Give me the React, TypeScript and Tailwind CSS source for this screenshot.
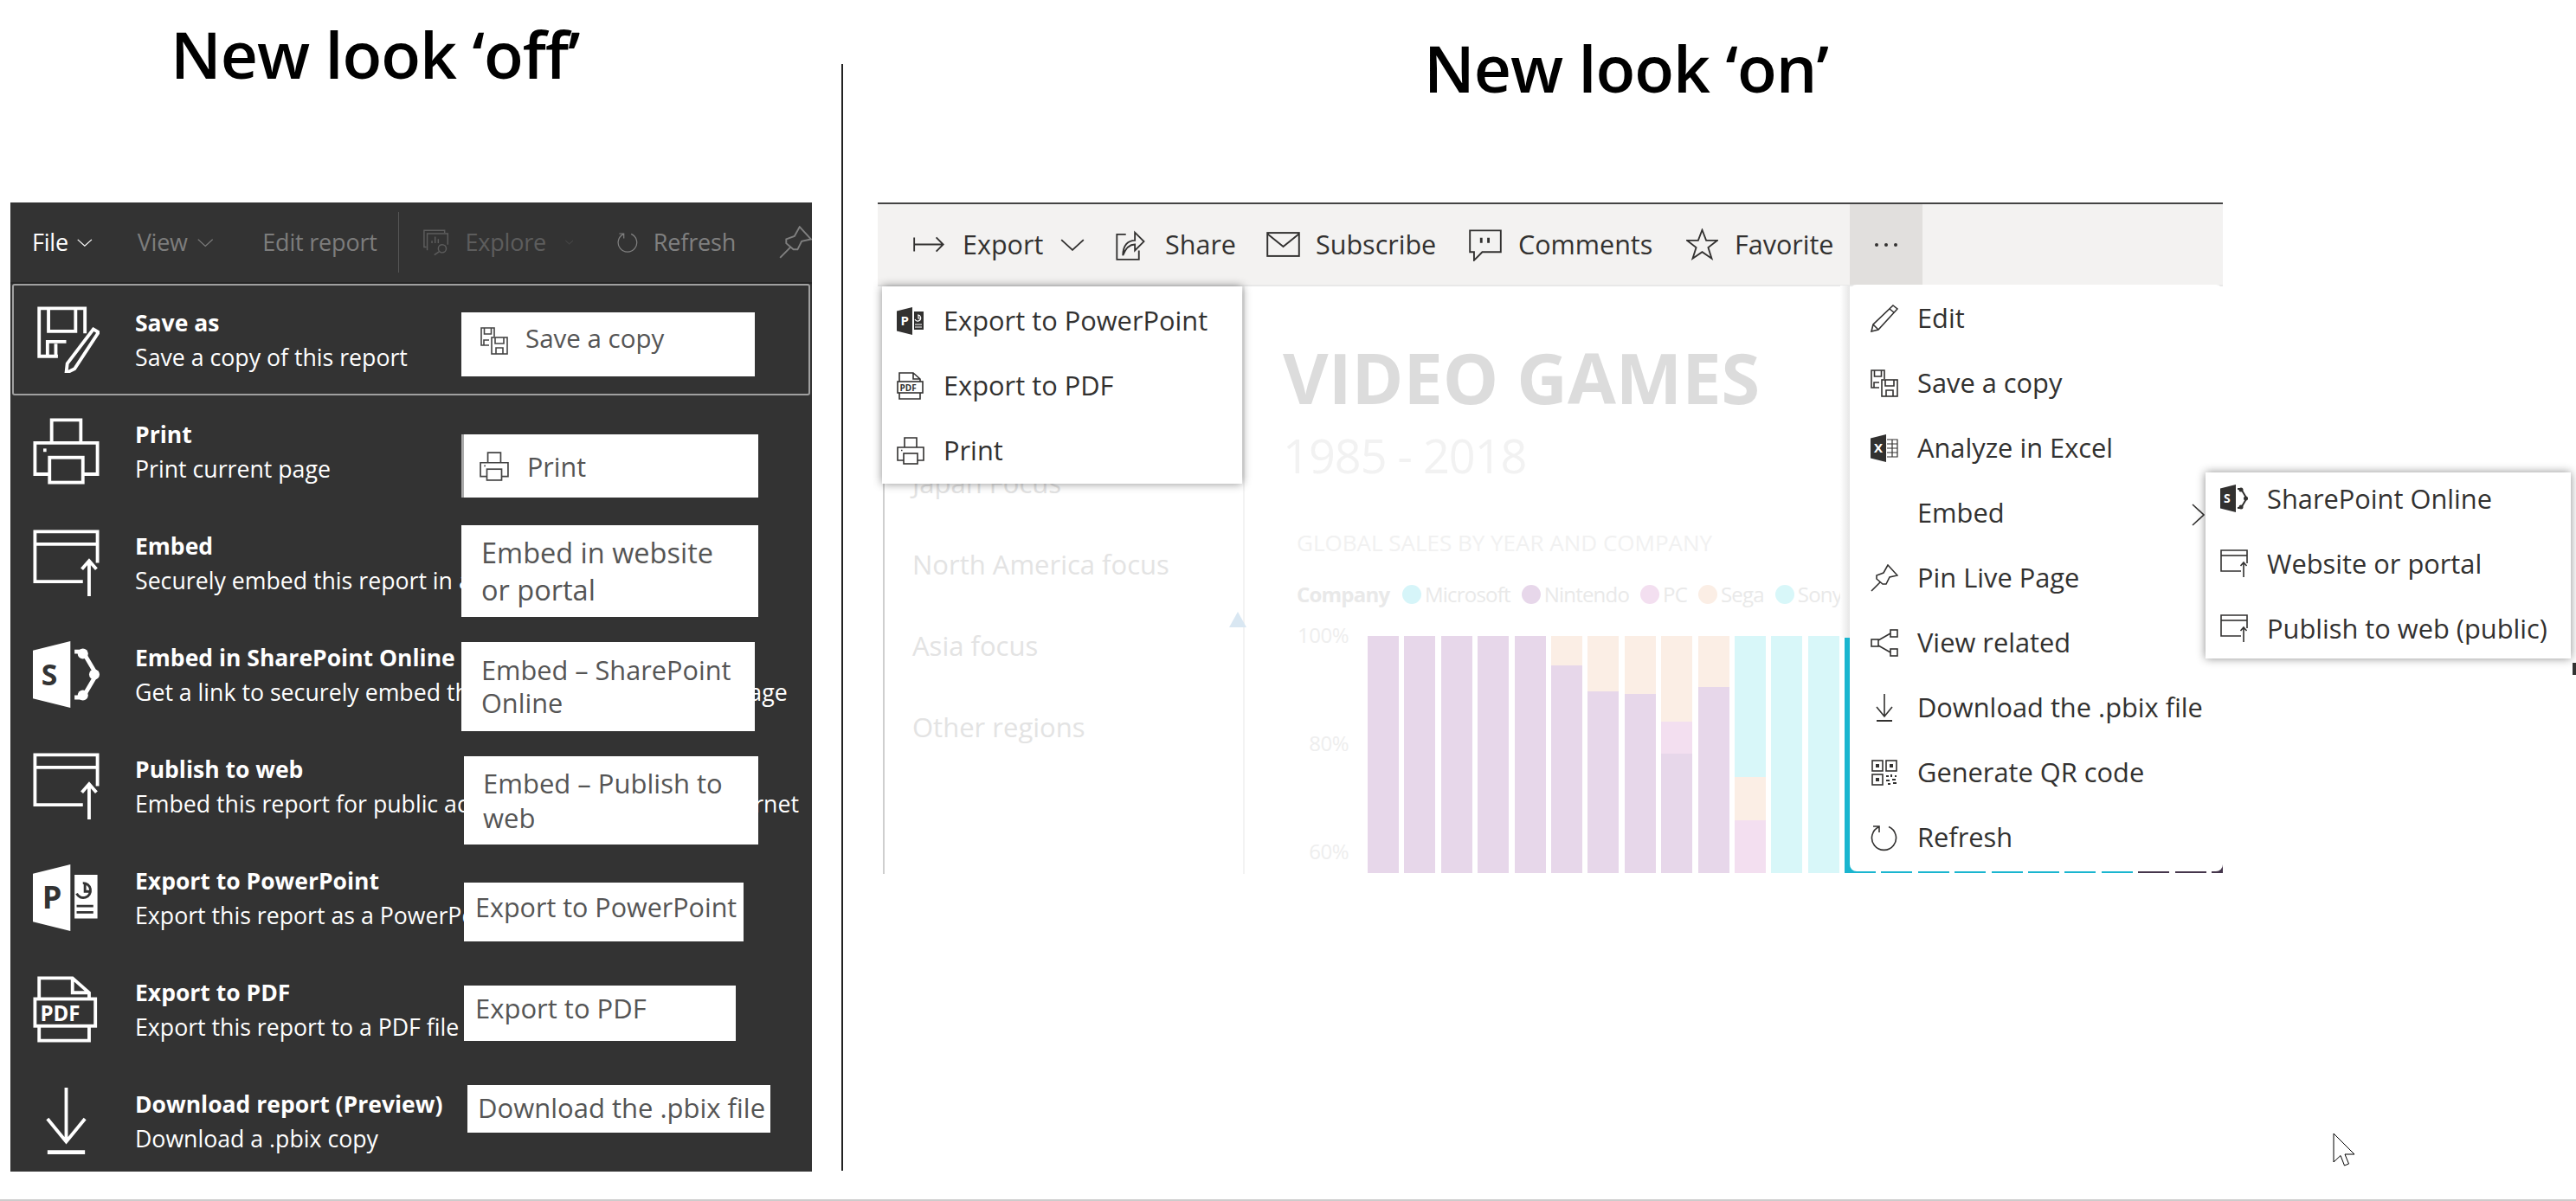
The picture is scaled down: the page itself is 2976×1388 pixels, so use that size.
import type { ReactNode } from "react";

type IconProps = { className?: string; ink?: string };

function Svg({ className, children }: { className?: string; children: ReactNode }) {
  return (
    <svg viewBox="0 0 32 32" fill="none" stroke="currentColor" strokeWidth="1.6" className={className}>
      {children}
    </svg>
  );
}

function SaveCopyIcon({ className }: IconProps) {
  return (
    <Svg className={className}>
      <path d="M10 21H1V1h15v10" />
      <path d="M4.500 1v7h8V1" />
      <path d="M4 21v-6h6" />
      <rect x="13" y="12" width="18" height="19" />
      <path d="M17 12v7h10v-7M18 31v-7h8v7" />
    </Svg>
  );
}

function SaveAsIcon({ className }: IconProps) {
  return (
    <Svg className={className}>
      <path d="M12 24H3V1h22v12" />
      <path d="M7.500 1v11h13V1" />
      <path d="M7 24v-7h9M11 18v6" />
      <path d="M29 11l2.500 1.500L20 30l-4 2 .5-4.500z" />
    </Svg>
  );
}

function PrintIcon({ className }: IconProps) {
  return (
    <Svg className={className}>
      <path d="M9 12V1h14v11" />
      <path d="M8 27H1V12h30v15h-7" />
      <rect x="8" y="19" width="16" height="12" />
      <path d="M5 15.500h1.500" />
    </Svg>
  );
}

function EmbedIcon({ className }: IconProps) {
  return (
    <Svg className={className}>
      <path d="M24 25H1V1h30v15" />
      <path d="M1 7h30" />
      <path d="M27 32V15M23.500 19l3.500-4 3.500 4" />
    </Svg>
  );
}

function SharePointIcon({ className, ink = "#fff" }: IconProps) {
  return (
    <Svg className={className}>
      <path d="M0 4.500L18 0v32L0 27.500z" fill="currentColor" stroke="none" />
      <text x="4" y="21" fontSize="14" fontWeight="700" fill={ink} stroke="none" fontFamily="Open Sans">S</text>
      <path d="M20 5h4l6.500 11L24 27h-4" strokeWidth="2" />
      <circle cx="24" cy="6" r="2.500" fill="currentColor" stroke="none" />
      <circle cx="24" cy="26" r="2.500" fill="currentColor" stroke="none" />
      <circle cx="29.500" cy="16" r="2.500" fill="currentColor" stroke="none" />
    </Svg>
  );
}

function PowerPointIcon({ className, ink = "#fff" }: IconProps) {
  return (
    <Svg className={className}>
      <path d="M0 4.500L18 0v32L0 27.500z" fill="currentColor" stroke="none" />
      <text x="4.500" y="21" fontSize="15" fontWeight="700" fill={ink} stroke="none" fontFamily="Open Sans">P</text>
      <path d="M20 5h11v21H20z" fill="currentColor" stroke="none" />
      <path d="M24 9a3.500 3.500 0 1 1-3 5M25 9v4h3M21 20h8M21 23h8" stroke={ink} strokeWidth="1.200" />
    </Svg>
  );
}

function ExcelIcon({ className, ink = "#fff" }: IconProps) {
  return (
    <Svg className={className}>
      <path d="M0 4.500L18 0v32L0 27.500z" fill="currentColor" stroke="none" />
      <text x="4" y="21" fontSize="15" fontWeight="700" fill={ink} stroke="none" fontFamily="Open Sans">X</text>
      <path d="M19 6h12v20H19M19 11h12M19 16h12M19 21h12M25 6v20" strokeWidth="1.200" />
    </Svg>
  );
}

function PdfIcon({ className }: IconProps) {
  return (
    <Svg className={className}>
      <path d="M3 11V1h16l8 7v3M3 24v7h24v-7M19 1v7h8" />
      <rect x="1" y="11" width="29" height="13" />
      <text x="3.500" y="21.500" fontSize="10" fontWeight="700" fill="currentColor" stroke="none" fontFamily="Open Sans">PDF</text>
    </Svg>
  );
}

function DownloadIcon({ className }: IconProps) {
  return (
    <Svg className={className}>
      <path d="M16 0v26M7 15l9 11 9-11" />
      <path d="M7 31h18" strokeWidth="2" />
    </Svg>
  );
}

function PencilIcon({ className }: IconProps) {
  return (
    <Svg className={className}>
      <path d="M26 1l5 4-22 24-8 2 2-8zM3 23l6 6M22 5l5 4" />
    </Svg>
  );
}

function PinIcon({ className }: IconProps) {
  return (
    <Svg className={className}>
      <path d="M20 1l11 12-9 2-4 8-4 0L7 17v-4l8-3zM11 21L1 31" />
    </Svg>
  );
}

function RelatedIcon({ className }: IconProps) {
  return (
    <Svg className={className}>
      <rect x="1" y="12" width="8" height="8" />
      <rect x="23" y="1" width="8" height="8" />
      <rect x="23" y="23" width="8" height="8" />
      <path d="M9 13l14-8M9 19l14 8" />
    </Svg>
  );
}

function QrIcon({ className }: IconProps) {
  return (
    <Svg className={className}>
      <rect x="2" y="2" width="12" height="12" />
      <rect x="18" y="2" width="12" height="12" />
      <rect x="2" y="18" width="12" height="12" />
      <path d="M6 6h4v4H6zM22 6h4v4h-4zM6 22h4v4H6z" fill="currentColor" stroke="none" />
      <path d="M18 20h3M24 18v3M28 20h2M18 25h4M25 24h4M20 29h3M26 28h4" strokeWidth="2" />
    </Svg>
  );
}

function RefreshIcon({ className }: IconProps) {
  return (
    <Svg className={className}>
      <path d="M21 3.500a14 14 0 1 1-11 0M10 10V3H3" />
    </Svg>
  );
}

function ArrowOutIcon({ className }: IconProps) {
  return (
    <Svg className={className}>
      <path d="M1 9v14M1 16h29M23 9l7 7-7 7" />
    </Svg>
  );
}

function ShareIcon({ className }: IconProps) {
  return (
    <Svg className={className}>
      <path d="M11 6H2v25h22v-9" />
      <path d="M8 27c0-10 5-15 12-15V4l9 9-9 9v-6c-5 0-9 3-12 11z" />
    </Svg>
  );
}

function MailIcon({ className }: IconProps) {
  return (
    <Svg className={className}>
      <rect x="1" y="5" width="30" height="22" />
      <path d="M1 6l15 12L31 6" />
    </Svg>
  );
}

function CommentIcon({ className }: IconProps) {
  return (
    <Svg className={className}>
      <path d="M1 2h30v21H13l-8 8v-8H1z" />
      <path d="M12 9v5M19 9v5" strokeWidth="2.400" />
    </Svg>
  );
}

function StarIcon({ className }: IconProps) {
  return (
    <Svg className={className}>
      <path d="M16 1.500l4 10.500h11l-9 7 3.500 11L16 23.500 6.500 30 10 19l-9-7h11z" />
    </Svg>
  );
}

function Chevron({ className }: IconProps) {
  return (
    <svg viewBox="0 0 24 12" fill="none" stroke="currentColor" strokeWidth="1.600" className={className}>
      <path d="M1 1l11 10L23 1" />
    </svg>
  );
}

function ExploreIcon({ className }: IconProps) {
  return (
    <Svg className={className}>
      <path d="M4 22H1V1h26v3" />
      <path d="M5 26V5h26v14" />
      <path d="M11 17v-3M15 17V9M19 17v-5" />
      <circle cx="24" cy="24" r="5" />
      <path d="M20 28l-6 4" />
    </Svg>
  );
}

const panelIcon = "w-[77px] h-[77px]";

const panelRows = [
  { title: "Save as", desc: "Save a copy of this report", icon: <SaveAsIcon className={panelIcon} />, active: true },
  { title: "Print", desc: "Print current page", icon: <PrintIcon className={panelIcon} /> },
  { title: "Embed", desc: "Securely embed this report in a website or portal", icon: <EmbedIcon className={panelIcon} /> },
  { title: "Embed in SharePoint Online", desc: "Get a link to securely embed this report in a SharePoint page", icon: <SharePointIcon ink="#333333" className={panelIcon} /> },
  { title: "Publish to web", desc: "Embed this report for public access by anyone on the internet", icon: <EmbedIcon className={panelIcon} /> },
  { title: "Export to PowerPoint", desc: "Export this report as a PowerPoint presentation", icon: <PowerPointIcon ink="#333333" className={panelIcon} /> },
  { title: "Export to PDF", desc: "Export this report to a PDF file", icon: <PdfIcon className={panelIcon} /> },
  { title: "Download report (Preview)", desc: "Download a .pbix copy", icon: <DownloadIcon className={panelIcon} /> },
];

function Callout({ className, children }: { className: string; children: ReactNode }) {
  return <div className={"absolute bg-white text-[#555] " + className}>{children}</div>;
}

function MenuRow({ icon, label, height }: { icon?: ReactNode; label: string; height: string }) {
  return (
    <div className={"flex items-center " + height}>
      <div className="w-[32px] h-[32px] shrink-0 text-[#323130]">{icon}</div>
      <span className="ml-[22px] text-[30.800px] text-[#323130] whitespace-nowrap">{label}</span>
    </div>
  );
}

const NIN = "#e7d7ea";
const SEG = "#fbeee5";
const PCC = "#f3dff0";
const SON = "#d8f7f9";
const TEAL = "#1ab5cf";
const DARK = "#45364c";

const bars: [string, number][][] = [
  [[NIN, 274]],
  [[NIN, 274]],
  [[NIN, 274]],
  [[NIN, 274]],
  [[NIN, 274]],
  [[SEG, 34], [NIN, 240]],
  [[SEG, 64], [NIN, 210]],
  [[SEG, 67], [NIN, 207]],
  [[SEG, 99], [PCC, 37], [NIN, 138]],
  [[SEG, 59], [NIN, 215]],
  [[SON, 163], [SEG, 50], [PCC, 61]],
  [[SON, 274]],
  [[SON, 274]],
  [[TEAL, 274]],
  [[TEAL, 274]],
  [[TEAL, 274]],
  [[TEAL, 274]],
  [[TEAL, 274]],
  [[TEAL, 274]],
  [[TEAL, 274]],
  [[TEAL, 274]],
  [[DARK, 274]],
  [[DARK, 274]],
  [[DARK, 274]],
];

const legend = [
  { name: "Microsoft", color: "#d6f5f9" },
  { name: "Nintendo", color: "#e7d7ea" },
  { name: "PC", color: "#f3dff0" },
  { name: "Sega", color: "#fbeee5" },
  { name: "Sony", color: "#d8f7f9" },
];

export default function App() {
  return (
    <div className="relative w-[2976px] h-[1388px] overflow-hidden bg-white border-b-2 border-[#cccccc] flex font-['Open_Sans',sans-serif]">
      {/* left side */}
      <div className="w-[972px] shrink-0 pl-[12px]">
        <div className="h-[234px] pt-[10px] pl-[185px]">
          <h1 className="text-[75px] leading-[104px] font-semibold text-black tracking-[-1px] whitespace-nowrap">New look ‘off’</h1>
        </div>
        <div className="w-[926px] h-[1120px] bg-[#333333] overflow-hidden">
          <div className="h-[94px] flex items-center text-[27px] tracking-[-0.2px] whitespace-nowrap border-b-2 border-[#262626]">
            <span className="ml-[25px] text-white">File</span>
            <Chevron className="ml-[10px] w-[23px] h-[11px] text-white" />
            <span className="ml-[52px] text-[#7d7d7d]">View</span>
            <Chevron className="ml-[11px] w-[24px] h-[11px] text-[#7d7d7d]" />
            <span className="ml-[57px] text-[#7d7d7d]">Edit report</span>
            <div className="ml-[24px] w-[2px] h-[70px] bg-[#555555]" />
            <ExploreIcon className="ml-[28px] w-[38px] h-[38px] text-[#5d5d5d]" />
            <span className="ml-[19px] text-[#5d5d5d]">Explore</span>
            <Chevron className="ml-[22px] w-[12px] h-[8px] text-[#5d5d5d]" />
            <RefreshIcon className="ml-[51px] w-[32px] h-[32px] text-[#808080]" />
            <span className="ml-[17px] text-[#808080]">Refresh</span>
            <PinIcon className="ml-[50px] w-[38px] h-[38px] text-[#808080] shrink-0" />
          </div>
          {panelRows.map((row) => (
            <div
              key={row.title}
              className={row.active ? "flex items-center h-[129px] mx-[2px] border-2 rounded-[3px] border-[#a0a0a0]" : "flex items-center h-[129px] mx-[2px] border-2 border-transparent"}
            >
              <div className="ml-[22px] w-[77px] h-[77px] shrink-0 text-white">{row.icon}</div>
              <div className="ml-[41px] text-white whitespace-nowrap">
                <div className="text-[26.500px] leading-[39px] font-bold">{row.title}</div>
                <div className="text-[26.700px] leading-[39px]">{row.desc}</div>
              </div>
            </div>
          ))}
        </div>
      </div>

      {/* divider */}
      <div className="w-[2px] h-[1279px] mt-[74px] bg-[#222222] shrink-0" />

      {/* right side */}
      <div className="pl-[40px] flex flex-col">
        <div className="h-[234px] pt-[26px] pl-[631px]">
          <h1 className="text-[75px] leading-[104px] font-semibold text-black tracking-[-1px] whitespace-nowrap">New look ‘on’</h1>
        </div>
        <div className="w-[1554px] h-[776px] overflow-hidden border-t-2 border-[#444444] flex flex-col">
          <div className="h-[95px] shrink-0 bg-[#f3f2f1] border-b-2 border-[#e8e8e8] flex items-center pl-[41px] text-[30.500px] text-[#323130] whitespace-nowrap">
            <div className="w-[233px] flex items-center">
              <ArrowOutIcon className="w-[37px] h-[37px]" />
              <span className="ml-[20px]">Export</span>
              <Chevron className="ml-[20px] w-[28px] h-[14px]" />
            </div>
            <div className="w-[175px] flex items-center">
              <ShareIcon className="w-[37px] h-[37px]" />
              <span className="ml-[21px]">Share</span>
            </div>
            <div className="w-[234px] flex items-center">
              <MailIcon className="w-[39px] h-[39px]" />
              <span className="ml-[18px]">Subscribe</span>
            </div>
            <div className="w-[251px] flex items-center">
              <CommentIcon className="w-[38px] h-[38px]" />
              <span className="ml-[19px]">Comments</span>
            </div>
            <div className="w-[189px] flex items-center">
              <StarIcon className="w-[37px] h-[37px]" />
              <span className="ml-[19px]">Favorite</span>
            </div>
            <div className="w-[84px] h-full bg-[#e1dfdd] flex items-center justify-center gap-[7px]">
              <div className="w-[4px] h-[4px] rounded-full bg-[#323130]" />
              <div className="w-[4px] h-[4px] rounded-full bg-[#323130]" />
              <div className="w-[4px] h-[4px] rounded-full bg-[#323130]" />
            </div>
          </div>

          <div className="flex flex-1 pl-[6px]">
            {/* slicer column */}
            <div className="w-[418px] shrink-0 border-l-2 border-r-2 border-l-[#cfcfcf] border-r-[#f3f3f3] pt-[180px] pl-[32px] text-[31px] text-[#e3e3e3]">
              <div className="h-[94px] flex items-center">Japan Focus</div>
              <div className="h-[94px] flex items-center">North America focus</div>
              <div className="h-[94px] flex items-center">Asia focus</div>
              <div className="h-[94px] flex items-center">Other regions</div>
            </div>

            {/* faded report page */}
            <div className="flex-1 pl-[44px] flex flex-col">
              <div className="mt-[75px] text-[81px] leading-[60px] font-bold text-[#dcdcdc] whitespace-nowrap">VIDEO GAMES</div>
              <div className="mt-[40px] text-[54px] leading-[40px] tracking-[-1px] text-[#f2f2f2]">1985 - 2018</div>
              <div className="mt-[66px] ml-[16px] text-[26px] leading-[30px] text-[#f1f1f1] whitespace-nowrap">GLOBAL SALES BY YEAR AND COMPANY</div>
              <div className="mt-[33px] ml-[16px] h-[24px] flex items-center text-[24px] tracking-[-0.8px] text-[#e9e9e9] whitespace-nowrap">
                <span className="font-bold w-[122px] shrink-0">Company</span>
                {legend.map((item) => (
                  <div key={item.name} className="flex items-center mr-[13px]">
                    <div className="w-[22px] h-[22px] rounded-full" style={{ backgroundColor: item.color }} />
                    <span className="ml-[4px]">{item.name}</span>
                  </div>
                ))}
              </div>
              <div className="mt-[36px] ml-[16px] flex">
                <div className="w-[60px] -mt-[16px] flex flex-col gap-[95px] text-[24px] leading-[30px] tracking-[-0.5px] text-[#eeeeee] text-right">
                  <div>100%</div>
                  <div>80%</div>
                  <div>60%</div>
                </div>
                <div className="ml-[22px] h-[274px] flex gap-[6.4px]">
                  {bars.map((bar, i) => (
                    <div key={i} className="w-[36px] shrink-0 flex flex-col">
                      {bar.map(([color, height], j) => (
                        <div key={j} style={{ backgroundColor: color, height }} />
                      ))}
                    </div>
                  ))}
                </div>
              </div>
            </div>
          </div>
        </div>
      </div>

      {/* callouts over the old file menu */}
      <Callout className="left-[533px] top-[361px] w-[339px] h-[74px] flex items-center pl-[21px] pb-[14px] text-[29.500px] leading-[40px]">
        <SaveCopyIcon className="mt-[6px] w-[34px] h-[32px] text-[#444]" />
        <span className="ml-[19px]">Save a copy</span>
      </Callout>
      <Callout className="left-[533px] top-[502px] w-[343px] h-[73px] flex items-center pl-[18px] border-l-[3px] border-[#aaaaaa] text-[30.500px] leading-[40px]">
        <PrintIcon className="w-[34px] h-[34px] text-[#444]" />
        <span className="ml-[21px]">Print</span>
      </Callout>
      <Callout className="left-[533px] top-[607px] w-[343px] h-[106px] pl-[23px] pt-[10px] text-[32.500px] leading-[43px]">Embed in website<br />or portal</Callout>
      <Callout className="left-[533px] top-[742px] w-[339px] h-[103px] pl-[23px] pt-[13px] text-[30.700px] leading-[38px]">Embed – SharePoint<br />Online</Callout>
      <Callout className="left-[536px] top-[874px] w-[340px] h-[102px] pl-[22px] pt-[11px] text-[31px] leading-[40px]">Embed – Publish to<br />web</Callout>
      <Callout className="left-[536px] top-[1020px] w-[323px] h-[68px] pl-[13px] pt-[8px] whitespace-nowrap text-[30.500px] leading-[40px]">Export to PowerPoint</Callout>
      <Callout className="left-[536px] top-[1139px] w-[314px] h-[64px] pl-[13px] pt-[6px] whitespace-nowrap text-[31px] leading-[40px]">Export to PDF</Callout>
      <Callout className="left-[540px] top-[1254px] w-[350px] h-[55px] pl-[12px] pt-[6px] whitespace-nowrap text-[31px] leading-[40px]">Download the .pbix file</Callout>

      {/* export menu */}
      <div className="absolute left-[1019px] top-[331px] w-[416px] h-[228px] bg-white shadow-[0_0_10px_rgba(0,0,0,0.45)] pl-[17px] pt-[2px]">
        <MenuRow height="h-[75px]" label="Export to PowerPoint" icon={<PowerPointIcon className="w-[32px] h-[32px]" />} />
        <MenuRow height="h-[75px]" label="Export to PDF" icon={<PdfIcon className="w-[32px] h-[32px]" />} />
        <MenuRow height="h-[75px]" label="Print" icon={<PrintIcon className="w-[32px] h-[32px]" />} />
      </div>

      {/* triangle on the slicer edge */}
      <div className="absolute left-[1420px] top-[707px] border-x-[10px] border-b-[18px] border-x-transparent border-b-[#d9e7f2]" />

      {/* more menu */}
      <div className="absolute left-[2126px] top-[330px] w-[11px] h-[407px] bg-gradient-to-r from-white to-[#e6e6e6]" />
      <div className="absolute left-[2137px] top-[329px] w-[431px] h-[678px] bg-white rounded-[8px] pl-[24px] pt-[1px]">
        <MenuRow height="h-[75px]" label="Edit" icon={<PencilIcon className="w-[32px] h-[32px]" />} />
        <MenuRow height="h-[75px]" label="Save a copy" icon={<SaveCopyIcon className="w-[32px] h-[32px]" />} />
        <MenuRow height="h-[75px]" label="Analyze in Excel" icon={<ExcelIcon className="w-[32px] h-[32px]" />} />
        <MenuRow height="h-[75px]" label="Embed" />
        <MenuRow height="h-[75px]" label="Pin Live Page" icon={<PinIcon className="w-[32px] h-[32px]" />} />
        <MenuRow height="h-[75px]" label="View related" icon={<RelatedIcon className="w-[32px] h-[32px]" />} />
        <MenuRow height="h-[75px]" label="Download the .pbix file" icon={<DownloadIcon className="w-[32px] h-[32px]" />} />
        <MenuRow height="h-[75px]" label="Generate QR code" icon={<QrIcon className="w-[32px] h-[32px]" />} />
        <MenuRow height="h-[75px]" label="Refresh" icon={<RefreshIcon className="w-[32px] h-[32px]" />} />
      </div>
      <svg viewBox="0 0 16 26" fill="none" stroke="#323130" strokeWidth="1.600" className="absolute left-[2532px] top-[582px] w-[16px] h-[26px]">
        <path d="M1 1l13 12L1 25" />
      </svg>

      {/* embed submenu */}
      <div className="absolute left-[2548px] top-[546px] w-[422px] h-[215px] bg-white shadow-[0_0_10px_rgba(0,0,0,0.45)] pl-[17px] flex flex-col gap-[15px]">
        <MenuRow height="h-[60px]" label="SharePoint Online" icon={<SharePointIcon className="w-[32px] h-[32px]" />} />
        <MenuRow height="h-[60px]" label="Website or portal" icon={<EmbedIcon className="w-[32px] h-[32px]" />} />
        <MenuRow height="h-[60px]" label="Publish to web (public)" icon={<EmbedIcon className="w-[32px] h-[32px]" />} />
      </div>
      <div className="absolute left-[2972px] top-[766px] w-[4px] h-[14px] bg-[#333333]" />

      {/* mouse pointer */}
      <svg viewBox="0 0 26 40" fill="white" stroke="black" strokeWidth="1" className="absolute left-[2695px] top-[1309px] w-[26px] h-[40px]">
        <path d="M1 1L25 25H14L18.500 36L13.500 38L9 26.500L1 34Z" />
      </svg>
    </div>
  );
}
